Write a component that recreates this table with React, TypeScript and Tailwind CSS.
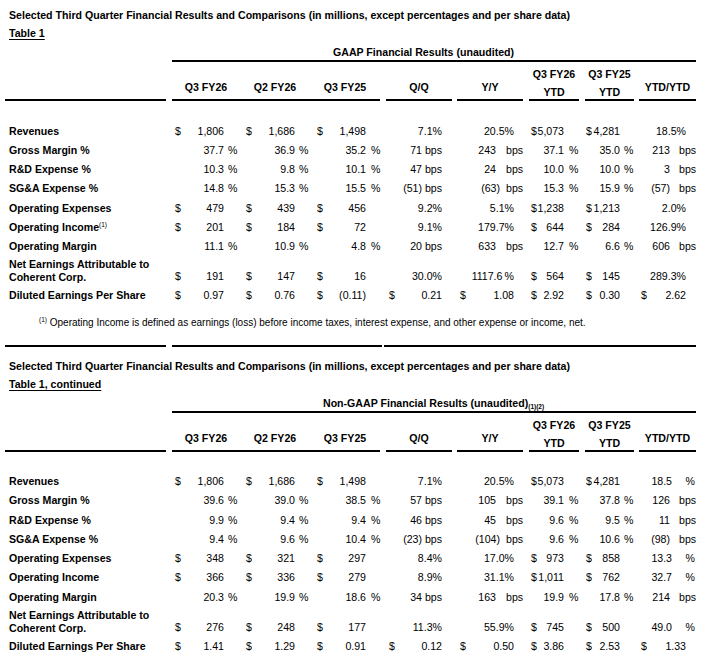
import React from "react";

type S = "pct" | "bps" | "pctR" | undefined;
type Cell = { d?: boolean; v: string; s?: S };
type Row = { label: React.ReactNode; cells: Cell[]; two?: boolean };

const GRID = "grid grid-cols-[164px_71px_70px_73px_72px_71px_56px_55px_62px]";

const COLS: { dl: string; none: string; pct?: string; bps?: string; pctR?: string }[] = [
  { dl: "pl-[6px]", none: "w-[16px]", pct: "w-[16px] pl-[4px]" },
  { dl: "pl-[6px]", none: "w-[15px]", pct: "w-[15px] pl-[4px]" },
  { dl: "pl-[7px]", none: "w-[17px]", pct: "w-[17px] pl-[5px]" },
  { dl: "pl-[6px]", none: "w-[13px]" },
  { dl: "pl-[5px]", none: "w-[12px]", bps: "w-[30px] pl-[10px]" },
  { dl: "pl-[5px]", none: "w-[18px]", pct: "w-[18px] pl-[5px]" },
  { dl: "pl-[4px]", none: "w-[17px]", pct: "w-[17px] pl-[4px]" },
  { dl: "pl-[4px]", none: "w-[13px]", bps: "w-[29px] pl-[9px]", pctR: "w-[27px] pr-[4px] text-right" },
];

const HEAD_MARGINS = [
  "mr-[3px]",
  "ml-[3px]",
  "",
  "mr-[3px]",
  "ml-[3px] mr-[3px]",
  "ml-[2px] mr-[3px]",
  "ml-[3px] mr-[3px]",
  "ml-[3px] mr-[3px]",
  "ml-[2px] mr-[3px]",
];

const HEADS: string[][] = [
  [],
  ["Q3 FY26"],
  ["Q2 FY26"],
  ["Q3 FY25"],
  ["Q/Q"],
  ["Y/Y"],
  ["Q3 FY26", "YTD"],
  ["Q3 FY25", "YTD"],
  ["YTD/YTD"],
];

function ValueCell({ c, col, two }: { c: Cell; col: number; two?: boolean }) {
  const cfg = COLS[col];
  const suf = (c.s ? cfg[c.s] : cfg.none) || cfg.none;
  const sufText = c.s === "bps" ? "bps" : c.s ? "%" : "";
  const hang = col === 4 && c.v.startsWith("(");
  return (
    <div className={"flex whitespace-nowrap " + (two ? "self-end pb-[3px]" : "")}>
      {c.d ? <span className={"shrink-0 " + cfg.dl}>$</span> : null}
      <span className={"flex-1 text-right " + (hang ? "-mr-[4px]" : "")}>{c.v}</span>
      <span className={"shrink-0 " + suf}>{sufText}</span>
    </div>
  );
}

function Sup() {
  return <span className="relative -top-[4px] text-[6.5px] font-normal leading-none">(1)</span>;
}

const ROWS1: Row[] = [
  {
    label: "Revenues",
    cells: [
      { d: true, v: "1,806" },
      { d: true, v: "1,686" },
      { d: true, v: "1,498" },
      { v: "7.1%" },
      { v: "20.5%" },
      { d: true, v: "5,073" },
      { d: true, v: "4,281" },
      { v: "18.5%" },
    ],
  },
  {
    label: "Gross Margin %",
    cells: [
      { v: "37.7", s: "pct" },
      { v: "36.9", s: "pct" },
      { v: "35.2", s: "pct" },
      { v: "71 bps" },
      { v: "243", s: "bps" },
      { v: "37.1", s: "pct" },
      { v: "35.0", s: "pct" },
      { v: "213", s: "bps" },
    ],
  },
  {
    label: "R&D Expense %",
    cells: [
      { v: "10.3", s: "pct" },
      { v: "9.8", s: "pct" },
      { v: "10.1", s: "pct" },
      { v: "47 bps" },
      { v: "24", s: "bps" },
      { v: "10.0", s: "pct" },
      { v: "10.0", s: "pct" },
      { v: "3", s: "bps" },
    ],
  },
  {
    label: "SG&A Expense %",
    cells: [
      { v: "14.8", s: "pct" },
      { v: "15.3", s: "pct" },
      { v: "15.5", s: "pct" },
      { v: "(51) bps" },
      { v: "(63)", s: "bps" },
      { v: "15.3", s: "pct" },
      { v: "15.9", s: "pct" },
      { v: "(57)", s: "bps" },
    ],
  },
  {
    label: "Operating Expenses",
    cells: [
      { d: true, v: "479" },
      { d: true, v: "439" },
      { d: true, v: "456" },
      { v: "9.2%" },
      { v: "5.1%" },
      { d: true, v: "1,238" },
      { d: true, v: "1,213" },
      { v: "2.0%" },
    ],
  },
  {
    label: (
      <>
        Operating Income
        <Sup />
      </>
    ),
    cells: [
      { d: true, v: "201" },
      { d: true, v: "184" },
      { d: true, v: "72" },
      { v: "9.1%" },
      { v: "179.7%" },
      { d: true, v: "644" },
      { d: true, v: "284" },
      { v: "126.9%" },
    ],
  },
  {
    label: "Operating Margin",
    cells: [
      { v: "11.1", s: "pct" },
      { v: "10.9", s: "pct" },
      { v: "4.8", s: "pct" },
      { v: "20 bps" },
      { v: "633", s: "bps" },
      { v: "12.7", s: "pct" },
      { v: "6.6", s: "pct" },
      { v: "606", s: "bps" },
    ],
  },
  {
    label: (
      <>
        Net Earnings Attributable to
        <br />
        Coherent Corp.
      </>
    ),
    two: true,
    cells: [
      { d: true, v: "191" },
      { d: true, v: "147" },
      { d: true, v: "16" },
      { v: "30.0%" },
      { v: "1117.6\u2009%" },
      { d: true, v: "564" },
      { d: true, v: "145" },
      { v: "289.3%" },
    ],
  },
  {
    label: "Diluted Earnings Per Share",
    cells: [
      { d: true, v: "0.97" },
      { d: true, v: "0.76" },
      { d: true, v: "(0.11)" },
      { d: true, v: "0.21" },
      { d: true, v: "1.08" },
      { d: true, v: "2.92" },
      { d: true, v: "0.30" },
      { d: true, v: "2.62" },
    ],
  },
];

const ROWS2: Row[] = [
  {
    label: "Revenues",
    cells: [
      { d: true, v: "1,806" },
      { d: true, v: "1,686" },
      { d: true, v: "1,498" },
      { v: "7.1%" },
      { v: "20.5%" },
      { d: true, v: "5,073" },
      { d: true, v: "4,281" },
      { v: "18.5", s: "pctR" },
    ],
  },
  {
    label: "Gross Margin %",
    cells: [
      { v: "39.6", s: "pct" },
      { v: "39.0", s: "pct" },
      { v: "38.5", s: "pct" },
      { v: "57 bps" },
      { v: "105", s: "bps" },
      { v: "39.1", s: "pct" },
      { v: "37.8", s: "pct" },
      { v: "126", s: "bps" },
    ],
  },
  {
    label: "R&D Expense %",
    cells: [
      { v: "9.9", s: "pct" },
      { v: "9.4", s: "pct" },
      { v: "9.4", s: "pct" },
      { v: "46 bps" },
      { v: "45", s: "bps" },
      { v: "9.6", s: "pct" },
      { v: "9.5", s: "pct" },
      { v: "11", s: "bps" },
    ],
  },
  {
    label: "SG&A Expense %",
    cells: [
      { v: "9.4", s: "pct" },
      { v: "9.6", s: "pct" },
      { v: "10.4", s: "pct" },
      { v: "(23) bps" },
      { v: "(104)", s: "bps" },
      { v: "9.6", s: "pct" },
      { v: "10.6", s: "pct" },
      { v: "(98)", s: "bps" },
    ],
  },
  {
    label: "Operating Expenses",
    cells: [
      { d: true, v: "348" },
      { d: true, v: "321" },
      { d: true, v: "297" },
      { v: "8.4%" },
      { v: "17.0%" },
      { d: true, v: "973" },
      { d: true, v: "858" },
      { v: "13.3", s: "pctR" },
    ],
  },
  {
    label: "Operating Income",
    cells: [
      { d: true, v: "366" },
      { d: true, v: "336" },
      { d: true, v: "279" },
      { v: "8.9%" },
      { v: "31.1%" },
      { d: true, v: "1,011" },
      { d: true, v: "762" },
      { v: "32.7", s: "pctR" },
    ],
  },
  {
    label: "Operating Margin",
    cells: [
      { v: "20.3", s: "pct" },
      { v: "19.9", s: "pct" },
      { v: "18.6", s: "pct" },
      { v: "34 bps" },
      { v: "163", s: "bps" },
      { v: "19.9", s: "pct" },
      { v: "17.8", s: "pct" },
      { v: "214", s: "bps" },
    ],
  },
  {
    label: (
      <>
        Net Earnings Attributable to
        <br />
        Coherent Corp.
      </>
    ),
    two: true,
    cells: [
      { d: true, v: "276" },
      { d: true, v: "248" },
      { d: true, v: "177" },
      { v: "11.3%" },
      { v: "55.9%" },
      { d: true, v: "745" },
      { d: true, v: "500" },
      { v: "49.0", s: "pctR" },
    ],
  },
  {
    label: "Diluted Earnings Per Share",
    cells: [
      { d: true, v: "1.41" },
      { d: true, v: "1.29" },
      { d: true, v: "0.91" },
      { d: true, v: "0.12" },
      { d: true, v: "0.50" },
      { d: true, v: "3.86" },
      { d: true, v: "2.53" },
      { d: true, v: "1.33" },
    ],
  },
];

function Section({
  top,
  table,
  heading,
  rows,
  footnote,
}: {
  top: string;
  table: string;
  heading: React.ReactNode;
  rows: Row[];
  footnote?: boolean;
}) {
  return (
    <div className={top}>
      <div className="pl-[4px] font-bold whitespace-nowrap">
        Selected Third Quarter Financial Results and Comparisons (in millions, except percentages and per share data)
      </div>
      <div className="mt-[5px] pl-[4px] font-bold">
        <span className="underline underline-offset-[2px]">{table}</span>
      </div>
      <div className={"mt-[6px] " + GRID}>
        <div />
        <div className="col-span-8 ml-[3px] mr-[3px] border-b-2 border-black pb-[1px] font-bold whitespace-nowrap">
          {heading}
        </div>
      </div>
      <div className={GRID}>
        {HEADS.map((h, i) => (
          <div
            key={i}
            className={
              "flex h-[39px] flex-col items-center border-b-2 border-black font-bold leading-[18px] whitespace-nowrap " +
              (h.length > 1 ? "pt-[3px] " : "pt-[16px] ") +
              HEAD_MARGINS[i]
            }
          >
            {h.map((t, j) => (
              <div key={j}>{t}</div>
            ))}
          </div>
        ))}
      </div>
      <div className="mt-[20.5px]">
        {rows.map((r, i) => (
          <div key={i} className={GRID + " " + (r.two ? "h-[30px]" : "h-[19.25px] items-center")}>
            <div className={"pl-[4px] font-bold whitespace-nowrap " + (r.two ? "pt-[2px]" : "")}>{r.label}</div>
            {r.cells.map((c, j) => (
              <ValueCell key={j} c={c} col={j} two={r.two} />
            ))}
          </div>
        ))}
      </div>
      {footnote ? (
        <div className="mt-[10px] pl-[34px] text-[10px] whitespace-nowrap">
          <span className="relative -top-[4px] text-[6.5px] leading-none">(1)</span> Operating Income is defined as
          earnings (loss) before income taxes, interest expense, and other expense or income, net.
        </div>
      ) : null}
    </div>
  );
}

export default function App() {
  return (
    <div className="min-h-[665px] w-[706px] bg-white pl-[5px] font-['Liberation_Sans',Arial,sans-serif] text-[10.6px] leading-[13px] text-black">
      <Section
        top="pt-[9px]"
        table="Table 1"
        heading={<div className="pl-[161px]">GAAP Financial Results (unaudited)</div>}
        rows={ROWS1}
        footnote
      />
      <div className={"mt-[16.5px] " + GRID}>
        <div className="mr-[3px] h-[2px] bg-black" />
        <div className="col-span-3 ml-[3px] mr-[1px] h-[2px] bg-black" />
        <div className="col-span-5 ml-[1px] mr-[3px] h-[2px] bg-black" />
      </div>
      <Section
        top="pt-[12.5px]"
        table="Table 1, continued"
        heading={
          <div className="pl-[151px]">
            Non-GAAP Financial Results (unaudited)
            <span className="relative top-[2px] text-[6.5px] leading-none">(1)(2)</span>
          </div>
        }
        rows={ROWS2}
      />
    </div>
  );
}
